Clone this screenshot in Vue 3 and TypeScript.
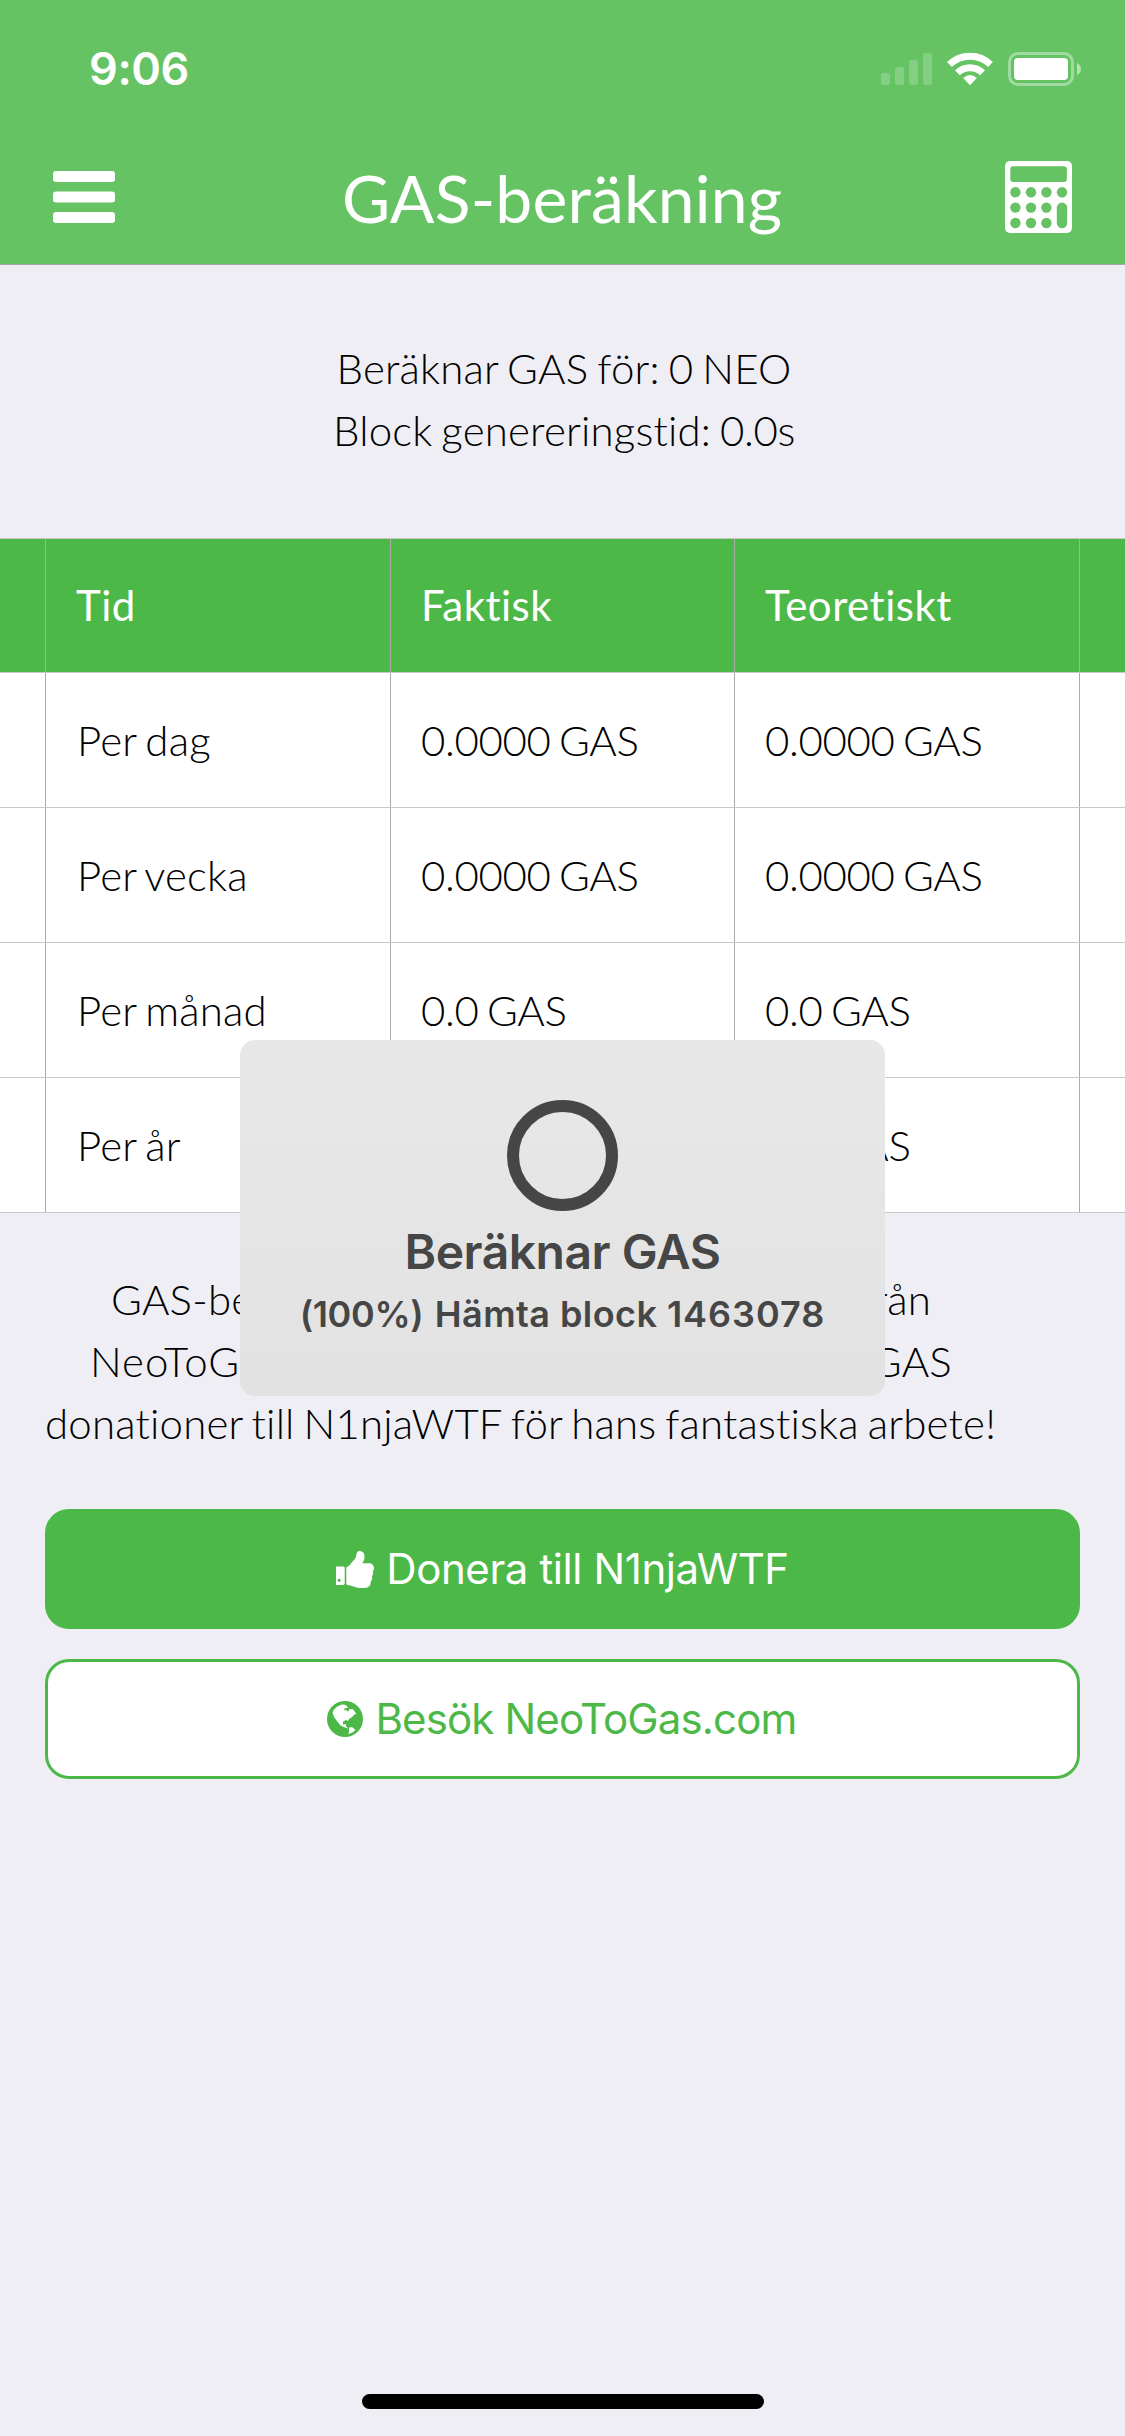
<script setup lang="ts">
interface GasRow {
  period: string
  actual: string
  theoretical: string
}

const rows: GasRow[] = [
  { period: 'Per dag', actual: '0.0000 GAS', theoretical: '0.0000 GAS' },
  { period: 'Per vecka', actual: '0.0000 GAS', theoretical: '0.0000 GAS' },
  { period: 'Per månad', actual: '0.0 GAS', theoretical: '0.0 GAS' },
  { period: 'Per år', actual: '0.0 GAS', theoretical: '0.0 GAS' },
]

const keyColumns: number[] = [10.4, 26, 41.4, 57]
const keyRows: number[] = [31.2, 46.6, 62]
</script>

<template>
  <div class="screen">
    <header class="header">
      <div class="status">
        <span class="clock">9:06</span>
        <div class="indicators">
          <svg class="signal" width="51" height="34" viewBox="0 0 51 34">
            <rect x="0" y="21" width="9" height="12" rx="2.5" />
            <rect x="14" y="15" width="9" height="18" rx="2.5" />
            <rect x="28" y="8" width="9" height="25" rx="2.5" />
            <rect x="42" y="1" width="9" height="32" rx="2.5" />
          </svg>
          <svg class="wifi" width="46" height="34" viewBox="0 0 46 34">
            <g fill="none" stroke="#fff" stroke-width="7">
              <path d="M2.5 12.6A29.4 29.4 0 0 1 43.5 12.6" />
              <path d="M10.4 20.8A18.2 18.2 0 0 1 35.6 20.8" />
            </g>
            <path fill="#fff" d="M23 33.2L16.2 26Q23 20 29.8 26Z" />
          </svg>
          <svg class="battery" width="74" height="34" viewBox="0 0 74 34">
            <rect x="1.5" y="1.5" width="63" height="31" rx="8.5" fill="none" stroke="#fff" stroke-width="3" opacity=".4" />
            <rect x="6" y="6" width="54" height="22" rx="4" fill="#fff" />
            <path d="M69 11Q73 13 73 17T69 23Z" fill="#fff" opacity=".5" />
          </svg>
        </div>
      </div>
      <div class="nav">
        <svg class="menu" width="62" height="52" viewBox="0 0 62 52" fill="#fff">
          <rect y="0" width="62" height="11" rx="3" />
          <rect y="20.5" width="62" height="11" rx="3" />
          <rect y="41" width="62" height="11" rx="3" />
        </svg>
        <h1>GAS-beräkning</h1>
        <svg class="calc" width="67" height="72" viewBox="0 0 67 72">
          <rect width="67" height="72" rx="5" fill="#fff" />
          <g class="keys">
            <rect x="5.3" y="5.3" width="56.6" height="15.8" rx="3" />
            <template v-for="(y, r) in keyRows" :key="y">
              <template v-for="(x, c) in keyColumns" :key="x">
                <circle v-if="r === 0 || c < 3" :cx="x" :cy="y" r="5.2" />
              </template>
            </template>
            <rect x="51.8" y="41.4" width="10.4" height="25.8" rx="5.2" />
          </g>
        </svg>
      </div>
    </header>

    <main>
      <div class="info">
        <span>Beräknar GAS för: 0 NEO</span>
        <span>Block genereringstid: <span class="amount">0.0s</span></span>
      </div>

      <div class="table">
        <div class="row head">
          <div class="gutter"></div>
          <div class="cell">Tid</div>
          <div class="cell">Faktisk</div>
          <div class="cell">Teoretiskt</div>
          <div class="cell"></div>
        </div>
        <div v-for="row in rows" :key="row.period" class="row">
          <div class="gutter"></div>
          <div class="cell period">{{ row.period }}</div>
          <div class="cell amount">{{ row.actual }}</div>
          <div class="cell amount">{{ row.theoretical }}</div>
          <div class="cell"></div>
        </div>
      </div>

      <div class="about">
        <div class="line first"><span>GAS-beräkning</span><span>från</span></div>
        <div class="line second"><span class="site">NeoToGas.com</span><span>GAS</span></div>
        <div class="line third"><span>donationer till N1njaWTF för hans fantastiska arbete!</span></div>
      </div>

      <div class="actions">
        <button class="btn solid">
          <svg width="38" height="37" viewBox="128 128 1536 1536" preserveAspectRatio="none" fill="currentColor">
            <path fill-rule="evenodd" d="M320 1344q0-26-19-45t-45-19q-27 0-45.500 19t-18.500 45q0 27 18.500 45.500t45.500 18.500q26 0 45-18.500t19-45.500zm160-512v640q0 26-19 45t-45 19h-288q-26 0-45-19t-19-45v-640q0-26 19-45t45-19h288q26 0 45 19t19 45zm1184 0q0 86-55 149 15 44 15 76 3 76-43 137 17 56 0 117-15 57-54 94 9 112-49 181-64 76-197 78h-129q-66 0-144-15.500t-121.500-29-120.500-39.500q-123-43-158-44-26-1-45-19.500t-19-44.500v-641q0-25 18-43.500t43-20.500q24-2 76-59t101-121q68-87 101-120 18-18 31-48t17.500-48.500 13.500-60.500q7-39 12.500-61t19.500-52 34-50q19-19 45-19 46 0 82.500 10.500t60 26 40 40.500 24 45 12 50 5 45 .5 39q0 38-9.500 76t-19 60-27.500 56q-3 6-10 18t-11 22-8 24h277q78 0 135 57t57 135z" />
          </svg>
          <span class="donate">Donera till N1njaWTF</span>
        </button>
        <button class="btn outline">
          <svg width="36" height="36" viewBox="0 0 36 36">
            <circle cx="18" cy="18" r="18" fill="currentColor" />
            <path fill="#fff" d="M5.500 11.500L7 8.500L10 5.800L14 3.800L17 3.500L20 5L21 6.800L17.500 7.500L17 9L20 9.500L21 11L22.500 8L26 8.200L29.200 12.500L27 14L24.500 16.500L22.500 17.500L21 20L19 19L16 20.500L16 23.500L18.800 23L19 25L21 27.500L18 26.500L13.500 24.500L9.500 19.500L7 16Z" />
            <path fill="#fff" d="M22 26.500L25 26L28.500 29L25.500 31.500L21.500 33L22 30Z" />
          </svg>
          <span class="visit">Besök NeoToGas.com</span>
        </button>
      </div>
    </main>

    <div class="hud">
      <div class="ring"></div>
      <div class="hud-title">Beräknar GAS</div>
      <div class="hud-sub"><span class="percent">(100%)</span> Hämta block <span class="block">1463078</span></div>
    </div>
    <div class="home"></div>
  </div>
</template>

<style>
body {
  margin: 0;
  background: #efeef4;
}
</style>

<style scoped>
.screen {
  position: relative;
  width: 1125px;
  height: 2436px;
  overflow: hidden;
  background: #efeef4;
  color: #000;
  font-family: Lato, sans-serif;
  font-weight: 300;
  font-size: 42px;
  letter-spacing: .17px;
  word-spacing: -2.6px;
  font-variant-ligatures: none;
}
.header {
  height: 264px;
  background: #65c364;
  border-bottom: 1px solid #a7a7aa;
  color: #fff;
}
.status {
  height: 132px;
  box-sizing: border-box;
  padding: 52px 43px 0 89px;
  display: flex;
  justify-content: space-between;
}
.clock {
  font: 600 45px/34px Inter, sans-serif;
  letter-spacing: -.4px;
}
.indicators {
  display: flex;
}
.signal {
  fill: #fff;
  opacity: .2;
}
.wifi {
  margin: 0 15px;
}
.nav {
  height: 132px;
  box-sizing: border-box;
  padding: 0 53px;
  display: flex;
  justify-content: space-between;
  align-items: flex-start;
}
.menu {
  margin-top: 39px;
}
.calc {
  margin-top: 29px;
}
.keys {
  fill: #65c364;
}
h1 {
  margin: 26px 0 0 4px;
  font: 400 66px/79px Lato, sans-serif;
  letter-spacing: .15px;
}
.info {
  height: 273px;
  box-sizing: border-box;
  padding: 72px 0 0 3px;
  display: flex;
  flex-direction: column;
  align-items: center;
  line-height: 62px;
}
.table {
  background: #fff;
  border-top: 1px solid #c8c7cc;
}
.row {
  display: grid;
  grid-template-columns: 45px 345px 344px 345px 46px;
  height: 134px;
  border-bottom: 1px solid #c8c7cc;
}
.head {
  height: 133px;
  background: #4cb848;
  color: #fff;
  font-weight: 400;
}
.cell {
  border-left: 1px solid #aaaaac;
  padding-left: 30px;
  line-height: 134px;
  white-space: nowrap;
}
.head .cell {
  line-height: 132px;
  letter-spacing: .5px;
}
.period {
  padding-left: 31px;
}
.amount {
  letter-spacing: -.35px;
}
.about {
  height: 296px;
  box-sizing: border-box;
  padding: 55px 0 0 45px;
  line-height: 62px;
}
.line {
  display: flex;
  justify-content: space-between;
  white-space: nowrap;
}
.first {
  margin-left: 66px;
  width: 820px;
}
.second {
  margin-left: 45px;
  width: 862px;
}
.site {
  letter-spacing: 1px;
}
.actions {
  display: flex;
  flex-direction: column;
  gap: 30px;
  padding: 0 45px;
}
.btn {
  height: 120px;
  box-sizing: border-box;
  border: 3px solid #4cb848;
  border-radius: 24px;
  display: flex;
  align-items: center;
  justify-content: center;
  gap: 12px;
  font: 400 42px/50px Inter, sans-serif;
  padding: 0;
}
.solid {
  background: #4cb848;
  color: #fff;
}
.outline {
  background: #fff;
  color: #4cb848;
  padding-right: 1px;
}
.donate {
  letter-spacing: -.4px;
}
.visit {
  letter-spacing: -.85px;
}
.hud {
  position: absolute;
  left: 240px;
  top: 1040px;
  width: 645px;
  height: 356px;
  box-sizing: border-box;
  padding-top: 60px;
  border-radius: 15px;
  background: linear-gradient(#e8e8e8, #e5e5e5 50%, #e2e2e2);
  color: #464646;
  display: flex;
  flex-direction: column;
  align-items: center;
  font-family: Inter, sans-serif;
  font-weight: 600;
  word-spacing: 0;
  white-space: nowrap;
}
.ring {
  width: 111px;
  height: 111px;
  box-sizing: border-box;
  border: 12px solid #464646;
  border-radius: 50%;
}
.hud-title {
  margin-top: 11px;
  font-size: 48px;
  line-height: 60px;
  letter-spacing: -.5px;
}
.hud-sub {
  margin-top: 9px;
  font-size: 36px;
  line-height: 46px;
  letter-spacing: .43px;
}
.percent {
  letter-spacing: -.35px;
  margin-right: 2px;
}
.block {
  letter-spacing: 1px;
}
.home {
  position: absolute;
  left: 362px;
  top: 2394px;
  width: 402px;
  height: 15px;
  border-radius: 8px;
  background: #000;
}
</style>
